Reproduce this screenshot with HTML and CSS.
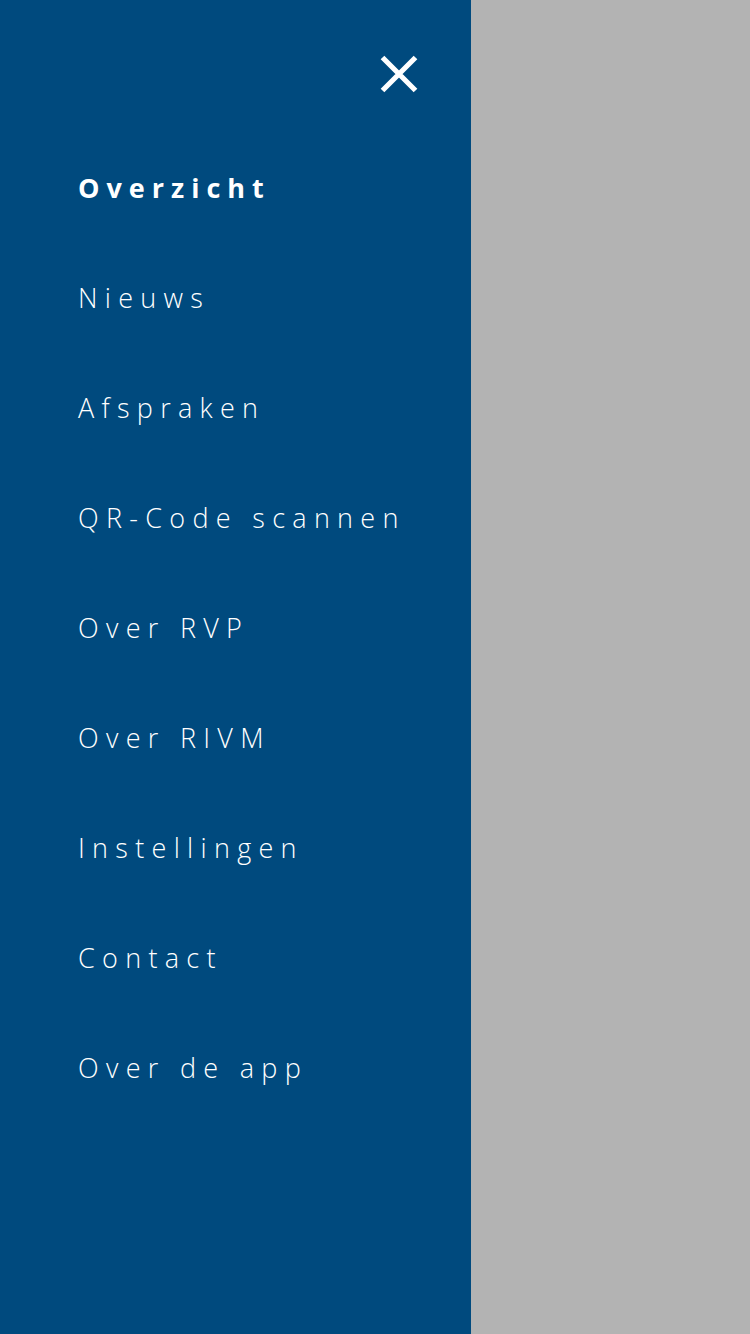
FILE: index.html
```html
<!DOCTYPE html>
<html lang="nl">
<head>
<meta charset="utf-8">
<link rel="stylesheet" href="styles.css">
</head>
<body>
<div class="screen">
  <aside class="drawer">
    <div class="drawer-head">
      <button class="close" aria-label="Sluiten">
        <svg width="38" height="38" viewBox="0 0 38 38"><path d="M2.5 2.5 L35.5 35.5 M35.5 2.5 L2.5 35.5" stroke="#fff" stroke-width="5.2" stroke-linecap="butt"/></svg>
      </button>
    </div>
    <nav class="menu">
      <a class="item active">Overzicht</a>
      <a class="item">Nieuws</a>
      <a class="item">Afspraken</a>
      <a class="item">QR-Code scannen</a>
      <a class="item">Over RVP</a>
      <a class="item">Over RIVM</a>
      <a class="item">Instellingen</a>
      <a class="item">Contact</a>
      <a class="item">Over de app</a>
    </nav>
  </aside>
  <div class="overlay"></div>
</div>
</body>
</html>
```

FILE: styles.css
```css
html, body { margin: 0; padding: 0; }
body { font-family: "Open Sans", "Liberation Sans", sans-serif; }
.screen { display: flex; width: 750px; height: 1334px; }
.drawer { width: 471px; background: #004a7e; display: flex; flex-direction: column; }
.overlay { flex: 1; background: #b3b3b3; }
.drawer-head { height: 132px; display: flex; justify-content: flex-end; align-items: flex-start; padding-right: 53px; box-sizing: border-box; }
.close { margin-top: 55px; background: none; border: 0; padding: 0; width: 38px; height: 38px; display: block; }
.close svg { display: block; }
.menu { display: flex; flex-direction: column; padding-left: 78px; }
.item { height: 110px; display: flex; align-items: center; color: #fff; font-size: 27px; font-weight: 300; letter-spacing: 7.3px; }
.item.active { font-weight: 700; letter-spacing: 7px; }
```
